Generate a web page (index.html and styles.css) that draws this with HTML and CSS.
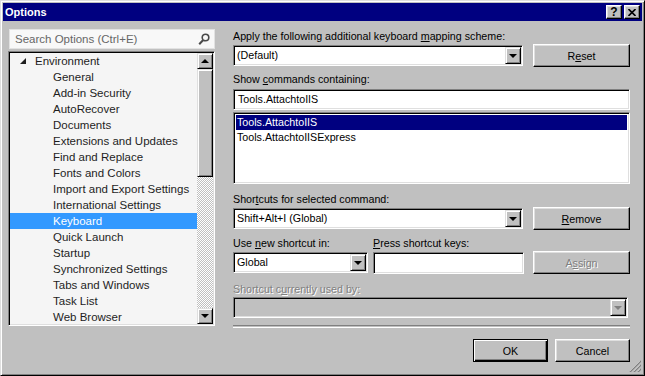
FILE: index.html
```html
<!DOCTYPE html>
<html lang="en">
<head>
    <meta charset="UTF-8">
    <title>Options</title>
    <link rel="stylesheet" href="styles.css">
</head>
<body>
    <div class="window">
        <div class="titlebar">
            <span class="title">Options</span>
            <div class="caption-btns">
                <span class="cap-btn help">?</span>
                <span class="cap-btn">
                    <svg width="8" height="7" viewBox="0 0 8 7"><path d="M0.5 0 L7.5 7 M7.5 0 L0.5 7" stroke="#000" stroke-width="1.6"/></svg>
                </span>
            </div>
        </div>

        <div class="content">
            <div class="main">
                <div class="nav">
                    <div class="search">
                        <span class="search-text">Search Options (Ctrl+E)</span>
                        <svg class="search-icon" width="12" height="13" viewBox="0 0 12 13">
                            <circle cx="7.5" cy="4.5" r="3.3" fill="none" stroke="#4a4a4a" stroke-width="1.6"/>
                            <path d="M5.2 7 L1.2 11.2" stroke="#4a4a4a" stroke-width="2"/>
                        </svg>
                    </div>
                    <div class="tree">
                        <div class="tree-items">
                            <div class="tree-item root">
                                <svg class="expander" width="7" height="7" viewBox="0 0 7 7"><polygon points="6,0 6,6 0,6" fill="#1e1e1e"/></svg>
                                Environment
                            </div>
                            <div class="tree-item">General</div>
                            <div class="tree-item">Add-in Security</div>
                            <div class="tree-item">AutoRecover</div>
                            <div class="tree-item">Documents</div>
                            <div class="tree-item">Extensions and Updates</div>
                            <div class="tree-item">Find and Replace</div>
                            <div class="tree-item">Fonts and Colors</div>
                            <div class="tree-item">Import and Export Settings</div>
                            <div class="tree-item">International Settings</div>
                            <div class="tree-item selected">Keyboard</div>
                            <div class="tree-item">Quick Launch</div>
                            <div class="tree-item">Startup</div>
                            <div class="tree-item">Synchronized Settings</div>
                            <div class="tree-item">Tabs and Windows</div>
                            <div class="tree-item">Task List</div>
                            <div class="tree-item">Web Browser</div>
                        </div>
                        <div class="vscroll">
                            <div class="sb-btn"><span class="arrow-up"></span></div>
                            <div class="sb-thumb"></div>
                            <div class="sb-track"></div>
                            <div class="sb-btn"><span class="arrow-down"></span></div>
                        </div>
                    </div>
                </div>

                <div class="panel">
                    <div class="label first">Apply the following additional keyboard <u>m</u>apping scheme:</div>
                    <div class="row">
                        <div class="field combo wide">
                            <span class="combo-text">(Default)</span>
                            <span class="drop-btn"><span class="arrow-down"></span></span>
                        </div>
                        <div class="button">R<u>e</u>set</div>
                    </div>

                    <div class="label">Show <u>c</u>ommands containing:</div>
                    <div class="field textbox">Tools.AttachtoIIS</div>
                    <div class="field listbox">
                        <div class="list-item selected">Tools.AttachtoIIS</div>
                        <div class="list-item">Tools.AttachtoIISExpress</div>
                    </div>

                    <div class="label gap-lg">Shor<u>t</u>cuts for selected command:</div>
                    <div class="row">
                        <div class="field combo wide">
                            <span class="combo-text">Shift+Alt+I (Global)</span>
                            <span class="drop-btn"><span class="arrow-down"></span></span>
                        </div>
                        <div class="button"><u>R</u>emove</div>
                    </div>

                    <div class="pair-labels">
                        <div class="label use-in">Use <u>n</u>ew shortcut in:</div>
                        <div class="label"><u>P</u>ress shortcut keys:</div>
                    </div>
                    <div class="row">
                        <div class="field combo scope">
                            <span class="combo-text">Global</span>
                            <span class="drop-btn"><span class="arrow-down"></span></span>
                        </div>
                        <div class="field keys"></div>
                        <div class="button disabled">A<u>s</u>sign</div>
                    </div>

                    <div class="label gap-lg disabled">Shortcut c<u>u</u>rrently used by:</div>
                    <div class="field combo used-by">
                        <span class="combo-text"></span>
                        <span class="drop-btn"><span class="arrow-down grey"></span></span>
                    </div>
                    <div class="separator"></div>
                </div>
            </div>

            <div class="footer">
                <div class="button default">OK</div>
                <div class="button">Cancel</div>
            </div>

            <svg class="grip" width="12" height="12" viewBox="0 0 12 12">
                <path d="M11 1 L1 11 M11 5 L5 11 M11 9 L9 11" stroke="#fff" stroke-width="1"/>
                <path d="M12 1 L1 12 M12 5 L5 12 M12 9 L9 12" stroke="#808080" stroke-width="1.4"/>
            </svg>
        </div>
    </div>
</body>
</html>
```

FILE: styles.css
```css
html, body {
    margin: 0;
    padding: 0;
}

body {
    font-family: 'Liberation Sans', Arial, sans-serif;
    font-size: 10.7px;
    color: #000;
    background-color: #c0c0c0;
}

u {
    text-decoration: underline;
    text-underline-offset: 1px;
}

.window {
    box-sizing: border-box;
    width: 645px;
    height: 376px;
    background-color: #c0c0c0;
    border: 1px solid;
    border-color: #dfdfdf #000 #000 #dfdfdf;
    box-shadow: inset 1px 1px #fff, inset -1px -1px #808080;
    padding: 2px;
    display: flex;
    flex-direction: column;
}

/* title bar */
.titlebar {
    height: 18px;
    background-color: #000080;
    display: flex;
    justify-content: space-between;
    align-items: center;
}

.title {
    color: #fff;
    font-weight: bold;
    font-size: 11px;
    padding-left: 2px;
}

.caption-btns {
    display: flex;
    gap: 2px;
    margin-right: 2px;
}

.cap-btn {
    box-sizing: border-box;
    width: 16px;
    height: 14px;
    background-color: #c0c0c0;
    border: 1px solid;
    border-color: #fff #000 #000 #fff;
    box-shadow: inset -1px -1px #808080, inset 1px 1px #dfdfdf;
    display: flex;
    align-items: center;
    justify-content: center;
}

.cap-btn.help {
    font-weight: bold;
    font-size: 12px;
    line-height: 12px;
}

/* content */
.content {
    flex: 1;
    display: flex;
    flex-direction: column;
    position: relative;
}

.main {
    display: flex;
    gap: 18px;
    padding: 8px 12px 0 5px;
}

.nav {
    width: 207px;
    display: flex;
    flex-direction: column;
    gap: 2px;
}

.search {
    box-sizing: border-box;
    height: 20px;
    margin-left: 1px;
    background-color: #f8f8f8;
    border: 1px solid #e2e2e2;
    display: flex;
    align-items: center;
    justify-content: space-between;
    padding: 0 4px 0 5px;
}

.search-text {
    color: #666;
    font-size: 11.5px;
}

.tree {
    box-sizing: border-box;
    height: 275px;
    background-color: #f5f5f5;
    border: 1px solid;
    border-color: #808080 #fff #fff #808080;
    box-shadow: inset 1px 1px #000, inset -1px -1px #dfdfdf;
    padding: 1px;
    display: flex;
    overflow: hidden;
}

.tree-items {
    flex: 1;
    overflow: hidden;
    font-size: 11.5px;
    color: #1e1e1e;
}

.tree-item {
    height: 16px;
    line-height: 16px;
    padding-left: 43px;
    white-space: nowrap;
}

.tree-item.root {
    padding-left: 10px;
    display: flex;
    align-items: center;
}

.expander {
    margin-right: 8px;
}

.tree-item.selected {
    background-color: #3399ff;
    color: #fff;
}

/* scrollbar */
.vscroll {
    width: 16px;
    display: flex;
    flex-direction: column;
}

.sb-btn,
.sb-thumb,
.drop-btn {
    box-sizing: border-box;
    background-color: #c0c0c0;
    border: 1px solid;
    border-color: #dfdfdf #000 #000 #dfdfdf;
    box-shadow: inset 1px 1px #fff, inset -1px -1px #808080;
}

.sb-btn {
    height: 16px;
    display: flex;
    align-items: center;
    justify-content: center;
}

.sb-thumb {
    height: 108px;
}

.sb-track {
    flex: 1;
    background: repeating-conic-gradient(#c0c0c0 0 25%, #fff 0 50%) 0 0 / 2px 2px;
}

.arrow-up,
.arrow-down {
    width: 0;
    height: 0;
    border-left: 4px solid transparent;
    border-right: 4px solid transparent;
}

.arrow-up {
    border-bottom: 4px solid #000;
}

.arrow-down {
    border-top: 4px solid #000;
}

.arrow-down.grey {
    border-top-color: #808080;
}

/* right panel */
.panel {
    width: 397px;
    display: flex;
    flex-direction: column;
}

.label {
    line-height: 13px;
    margin-top: 6px;
    white-space: nowrap;
}

.label.first {
    margin-top: 1px;
}

.label.gap-lg {
    margin-top: 9px;
}

.label.disabled {
    color: #808080;
    text-shadow: 1px 1px #fff;
}

.row {
    display: flex;
    align-items: flex-start;
    gap: 6px;
    margin-top: 1px;
}

.row .button {
    margin-left: auto;
}

.field {
    box-sizing: border-box;
    background-color: #fff;
    border: 1px solid;
    border-color: #808080 #fff #fff #808080;
    box-shadow: inset 1px 1px #000, inset -1px -1px #dfdfdf;
    padding: 1px;
}

.combo {
    height: 21px;
    margin-top: 1px;
    display: flex;
    align-items: stretch;
}

.combo.wide {
    width: 290px;
}

.combo-text {
    flex: 1;
    line-height: 17px;
    padding-left: 2px;
    white-space: nowrap;
}

.drop-btn {
    width: 16px;
    display: flex;
    align-items: center;
    justify-content: center;
}

.textbox {
    height: 21px;
    margin-top: 3px;
    line-height: 17px;
    padding-left: 4px;
}

.listbox {
    height: 72px;
    margin-top: 2px;
    padding: 2px;
}

.list-item {
    height: 15px;
    line-height: 15px;
    padding-left: 1px;
}

.list-item.selected {
    background-color: #000080;
    color: #fff;
}

.pair-labels {
    display: flex;
    margin-top: 1px;
}

.pair-labels .use-in {
    width: 140px;
}

.combo.scope {
    width: 135px;
}

.field.keys {
    width: 151px;
    height: 22px;
    margin-top: 1px;
    margin-left: -1px;
}

.combo.used-by {
    width: 395px;
    background-color: #c0c0c0;
}

.separator {
    margin-top: 7px;
    height: 1px;
    border-top: 1px solid #808080;
    border-bottom: 1px solid #fff;
}

/* buttons */
.button {
    box-sizing: border-box;
    width: 97px;
    height: 23px;
    background-color: #c0c0c0;
    border: 1px solid;
    border-color: #fff #000 #000 #fff;
    box-shadow: inset -1px -1px #808080, inset 1px 1px #dfdfdf;
    display: flex;
    align-items: center;
    justify-content: center;
}

.button.disabled {
    color: #808080;
    text-shadow: 1px 1px #fff;
}

.footer {
    display: flex;
    justify-content: flex-end;
    gap: 7px;
    padding: 11px 12px 0 0;
}

.footer .button {
    width: 75px;
}

.button.default {
    border: 1px solid #000;
    box-shadow: inset 1px 1px #fff, inset -1px -1px #000, inset -2px -2px #808080;
}

.grip {
    position: absolute;
    right: 1px;
    bottom: 1px;
}
```
